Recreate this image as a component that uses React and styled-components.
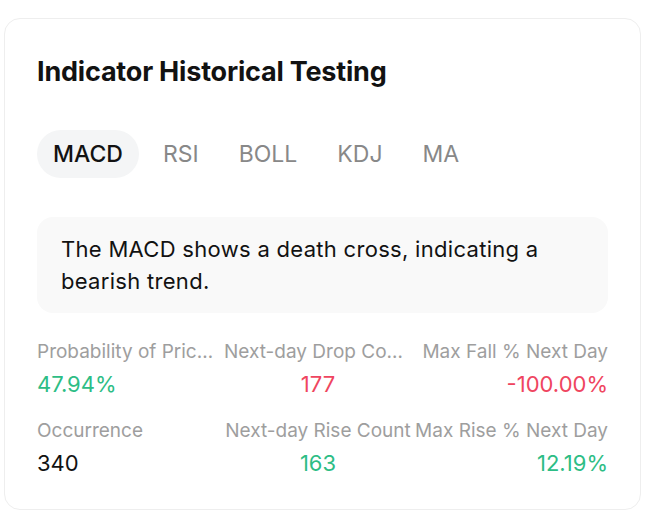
import styled, { createGlobalStyle } from 'styled-components';

const GlobalStyle = createGlobalStyle`
  body {
    margin: 0;
    background: #ffffff;
    font-family: Inter, "Noto Sans", sans-serif;
  }
`;

const tabs = ['MACD', 'RSI', 'BOLL', 'KDJ', 'MA'];

const stats = [
  { label: 'Probability of Price Drop', value: '47.94%', tone: 'up', align: 'left' },
  { label: 'Next-day Drop Count', value: '177', tone: 'down', align: 'center' },
  { label: 'Max Fall % Next Day', value: '-100.00%', tone: 'down', align: 'right' },
  { label: 'Occurrence', value: '340', tone: 'plain', align: 'left' },
  { label: 'Next-day Rise Count', value: '163', tone: 'up', align: 'center' },
  { label: 'Max Rise % Next Day', value: '12.19%', tone: 'up', align: 'right' },
];

const toneColors = {
  up: '#2dbd85',
  down: '#ef4560',
  plain: '#121212',
};

function App() {
  return (
    <>
      <GlobalStyle />
      <Page>
        <Card>
          <Title>Indicator Historical Testing</Title>
          <Tabs>
            {tabs.map((t, i) => (
              <Tab key={t} $active={i === 0}>
                {t}
              </Tab>
            ))}
          </Tabs>
          <Summary>
            The MACD shows a death cross, indicating a bearish trend.
          </Summary>
          <StatGrid>
            {stats.map((s) => (
              <Stat key={s.label} $align={s.align}>
                <Label>{s.label}</Label>
                <Value $tone={s.tone}>{s.value}</Value>
              </Stat>
            ))}
          </StatGrid>
        </Card>
      </Page>
    </>
  );
}

const Page = styled.div`
  padding: 18px 11px 3px 4px;
`;

const Card = styled.div`
  box-sizing: border-box;
  width: 637px;
  height: 492px;
  border: 1px solid #eeeeee;
  border-radius: 16px;
  padding: 37px 32px 0 32px;
`;

const Title = styled.h2`
  margin: 0;
  font-size: 27px;
  line-height: 32px;
  font-weight: 700;
  color: #121212;
  letter-spacing: -0.2px;
`;

const Tabs = styled.div`
  display: flex;
  gap: 8px;
  margin-top: 42px;
`;

const Tab = styled.div`
  height: 48px;
  padding: 0 16px;
  border-radius: 24px;
  display: flex;
  align-items: center;
  font-size: 23px;
  font-weight: ${(p) => (p.$active ? 500 : 400)};
  color: ${(p) => (p.$active ? '#121212' : '#888888')};
  background: ${(p) => (p.$active ? '#f4f5f6' : 'transparent')};
`;

const Summary = styled.div`
  margin-top: 39px;
  width: 571px;
  box-sizing: border-box;
  padding: 16px 24px;
  border-radius: 16px;
  background: #f9f9f9;
  font-size: 22px;
  line-height: 32px;
  letter-spacing: 0.3px;
  color: #121212;
`;

const StatGrid = styled.div`
  width: 571px;
  margin-top: 27px;
  display: grid;
  grid-template-columns: 187px 1fr 196px;
  row-gap: 21px;
`;

const Stat = styled.div`
  min-width: 0;
  display: flex;
  flex-direction: column;
  gap: 6px;
  text-align: ${(p) => p.$align};
`;

const Label = styled.div`
  font-size: 19px;
  line-height: 24px;
  color: #9e9e9e;
  white-space: nowrap;
  overflow: hidden;
  text-overflow: ellipsis;
`;

const Value = styled.div`
  font-size: 22px;
  line-height: 28px;
  color: ${(p) => toneColors[p.$tone]};
`;

export default App;
